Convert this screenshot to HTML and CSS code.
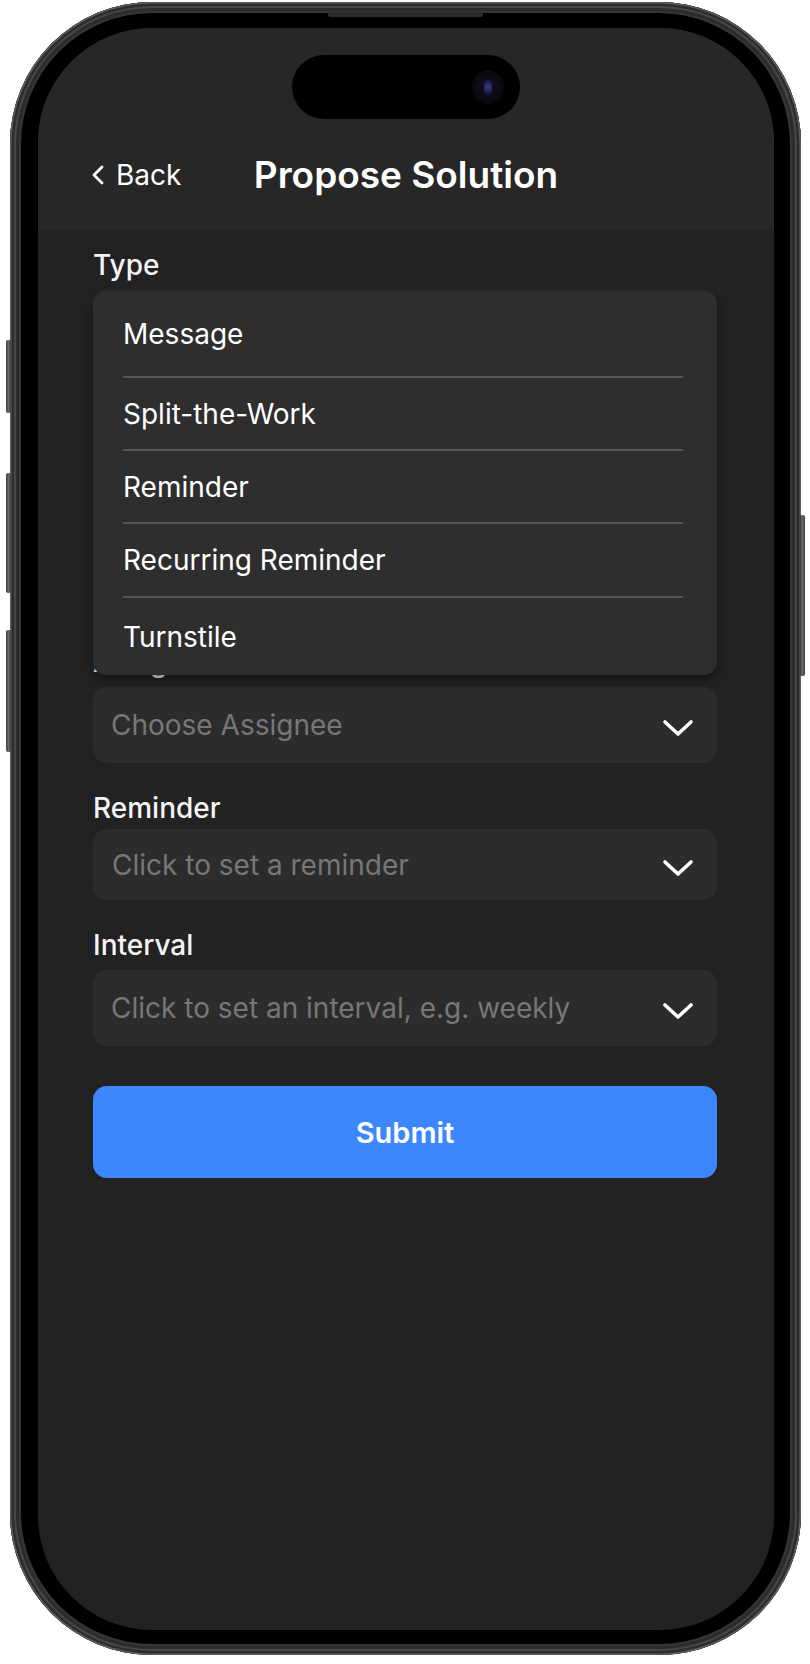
FILE: index.html
```html
<!DOCTYPE html>
<html lang="en">
<head>
<meta charset="utf-8">
<title>Propose Solution</title>
<link rel="stylesheet" href="styles.css">
</head>
<body>
<div class="phone">
  <span class="hw-btn hw-action"></span>
  <span class="hw-btn hw-vol-up"></span>
  <span class="hw-btn hw-vol-down"></span>
  <span class="hw-btn hw-power"></span>
  <span class="speaker"></span>
  <div class="bezel">
    <div class="screen">
      <header class="app-header">
        <div class="island"><span class="camera"><span class="lens"></span></span></div>
        <nav class="nav">
          <a class="back">
            <svg class="back-icon" width="14" height="20" viewBox="0 0 14 20"><path d="M11 2 L3 10 L11 18" fill="none" stroke="#fff" stroke-width="2.8" stroke-linecap="round" stroke-linejoin="round"/></svg>
            <span>Back</span>
          </a>
          <h1 class="title">Propose Solution</h1>
          <span class="nav-spacer"></span>
        </nav>
      </header>
      <main class="form">
        <div class="group group-type">
          <div class="label">Type</div>
          <div class="field field-type"></div>
          <ul class="menu">
            <li class="menu-item menu-first">Message</li>
            <li class="menu-item menu-mid">Split-the-Work</li>
            <li class="menu-item menu-mid">Reminder</li>
            <li class="menu-item menu-mid4">Recurring Reminder</li>
            <li class="menu-item menu-last">Turnstile</li>
          </ul>
        </div>
        <div class="group">
          <div class="field field-area"></div>
        </div>
        <div class="group">
          <div class="label">Assignee</div>
          <div class="field">
            <span class="placeholder">Choose Assignee</span>
            <svg class="chev" width="32" height="18" viewBox="0 0 32 18"><polyline points="3,3 16,15 29,3" fill="none" stroke="#fff" stroke-width="3.6" stroke-linecap="round" stroke-linejoin="round"/></svg>
          </div>
        </div>
        <div class="group group-tight">
          <div class="label">Reminder</div>
          <div class="field field-short">
            <span class="placeholder">Click to set a reminder</span>
            <svg class="chev" width="32" height="18" viewBox="0 0 32 18"><polyline points="3,3 16,15 29,3" fill="none" stroke="#fff" stroke-width="3.6" stroke-linecap="round" stroke-linejoin="round"/></svg>
          </div>
        </div>
        <div class="group">
          <div class="label">Interval</div>
          <div class="field">
            <span class="placeholder">Click to set an interval, e.g. weekly</span>
            <svg class="chev" width="32" height="18" viewBox="0 0 32 18"><polyline points="3,3 16,15 29,3" fill="none" stroke="#fff" stroke-width="3.6" stroke-linecap="round" stroke-linejoin="round"/></svg>
          </div>
        </div>
        <button class="submit">Submit</button>
      </main>
    </div>
  </div>
</div>
</body>
</html>
```

FILE: styles.css
```css
html, body {
  margin: 0;
  padding: 0;
  background: #ffffff;
}

body {
  font-family: Inter, "Noto Sans", "Liberation Sans", sans-serif;
  overflow: hidden;
}

.phone {
  position: relative;
  margin: 2px 0 0 10px;
  width: 791px;
  height: 1653px;
  box-sizing: border-box;
  padding: 11px;
  border-radius: 142px;
  background: #363636;
  box-shadow: inset 0 0 0 1.5px #5e5e5e, inset 0 0 0 4px #2d2d2d, inset 0 0 0 6px #474747, inset 0 0 0 9px #2c2c2c;
}

.hw-btn {
  position: absolute;
  width: 5px;
  border-radius: 2px;
  background: linear-gradient(90deg, #3a3a3a, #6a6a6a 50%, #3a3a3a);
}

.hw-action { left: -4px; top: 338px; height: 73px; }
.hw-vol-up { left: -4px; top: 471px; height: 120px; }
.hw-vol-down { left: -4px; top: 628px; height: 122px; }
.hw-power { right: -4px; top: 513px; height: 161px; }

.speaker {
  position: absolute;
  top: 10px;
  left: 318px;
  width: 155px;
  height: 5px;
  border-radius: 3px;
  background: #2c2c2c;
}

.bezel {
  height: 100%;
  box-sizing: border-box;
  padding: 15px 16px 14px 17px;
  background: #000000;
  border-radius: 131px;
}

.screen {
  height: 100%;
  background: #222222;
  border-radius: 114px;
  overflow: hidden;
  display: flex;
  flex-direction: column;
}

.app-header {
  background: #272727;
  padding: 27px 0 33px;
  display: flex;
  flex-direction: column;
  align-items: center;
}

.island {
  width: 228px;
  height: 64px;
  border-radius: 32px;
  background: #000000;
  display: flex;
  align-items: center;
  justify-content: flex-end;
  padding-right: 16px;
  box-sizing: border-box;
}

.camera {
  width: 32px;
  height: 34px;
  border-radius: 50%;
  background: radial-gradient(circle, #0c0c1a 40%, #08080c 70%, #050505 100%);
  display: flex;
  align-items: center;
  justify-content: center;
}

.lens {
  width: 8px;
  height: 14px;
  border-radius: 4px;
  background: radial-gradient(circle, #3a3f8a, #1a1c44 70%);
}

.nav {
  margin-top: 34px;
  width: 100%;
  height: 44px;
  display: grid;
  grid-template-columns: 1fr auto 1fr;
  align-items: center;
}

.back {
  display: flex;
  align-items: center;
  gap: 11px;
  padding-left: 53px;
  color: #ffffff;
  font-size: 28px;
  font-weight: 400;
  line-height: 34px;
}

.title {
  margin: 0;
  color: #ffffff;
  font-size: 37px;
  font-weight: 600;
  line-height: 44px;
  white-space: nowrap;
}

.form {
  padding: 18px 57px 0 55px;
  display: flex;
  flex-direction: column;
  gap: 28px;
}

.group {
  display: flex;
  flex-direction: column;
  gap: 8px;
}

.group-tight {
  gap: 4px;
}

.group-type {
  position: relative;
}

.label {
  color: #f4f4f4;
  font-size: 28px;
  font-weight: 500;
  line-height: 34px;
}

.field {
  height: 76px;
  box-sizing: border-box;
  background: #2c2c2c;
  border-radius: 14px;
  display: flex;
  align-items: center;
  justify-content: space-between;
  padding: 0 23px 0 18px;
}

.field-type { height: 72px; }
.field-area { height: 227px; }
.field-short { height: 71px; padding-left: 19px; }

.placeholder {
  color: #777777;
  font-size: 28px;
  line-height: 34px;
}

.chev {
  display: block;
  margin-top: 6px;
}

.menu {
  position: absolute;
  top: 43px;
  left: 0;
  right: 0;
  z-index: 2;
  margin: 0;
  padding: 0;
  list-style: none;
  background: #2e2e2e;
  border-radius: 13px;
  box-shadow: 0 5px 10px rgba(0, 0, 0, 0.4);
}

.menu-item {
  margin: 0 34px 0 30px;
  border-bottom: 2px solid #565656;
  display: flex;
  align-items: center;
  color: #ffffff;
  font-size: 28px;
  font-weight: 400;
  line-height: 34px;
}

.menu-first { height: 85px; }
.menu-mid { height: 71px; }
.menu-mid4 { height: 72px; }
.menu-last { height: 77px; border-bottom: none; }

.submit {
  margin-top: 12px;
  height: 92px;
  border: none;
  border-radius: 14px;
  background: #3d87fe;
  color: #ffffff;
  font-family: Inter, "Noto Sans", sans-serif;
  font-size: 29px;
  font-weight: 600;
}
```
